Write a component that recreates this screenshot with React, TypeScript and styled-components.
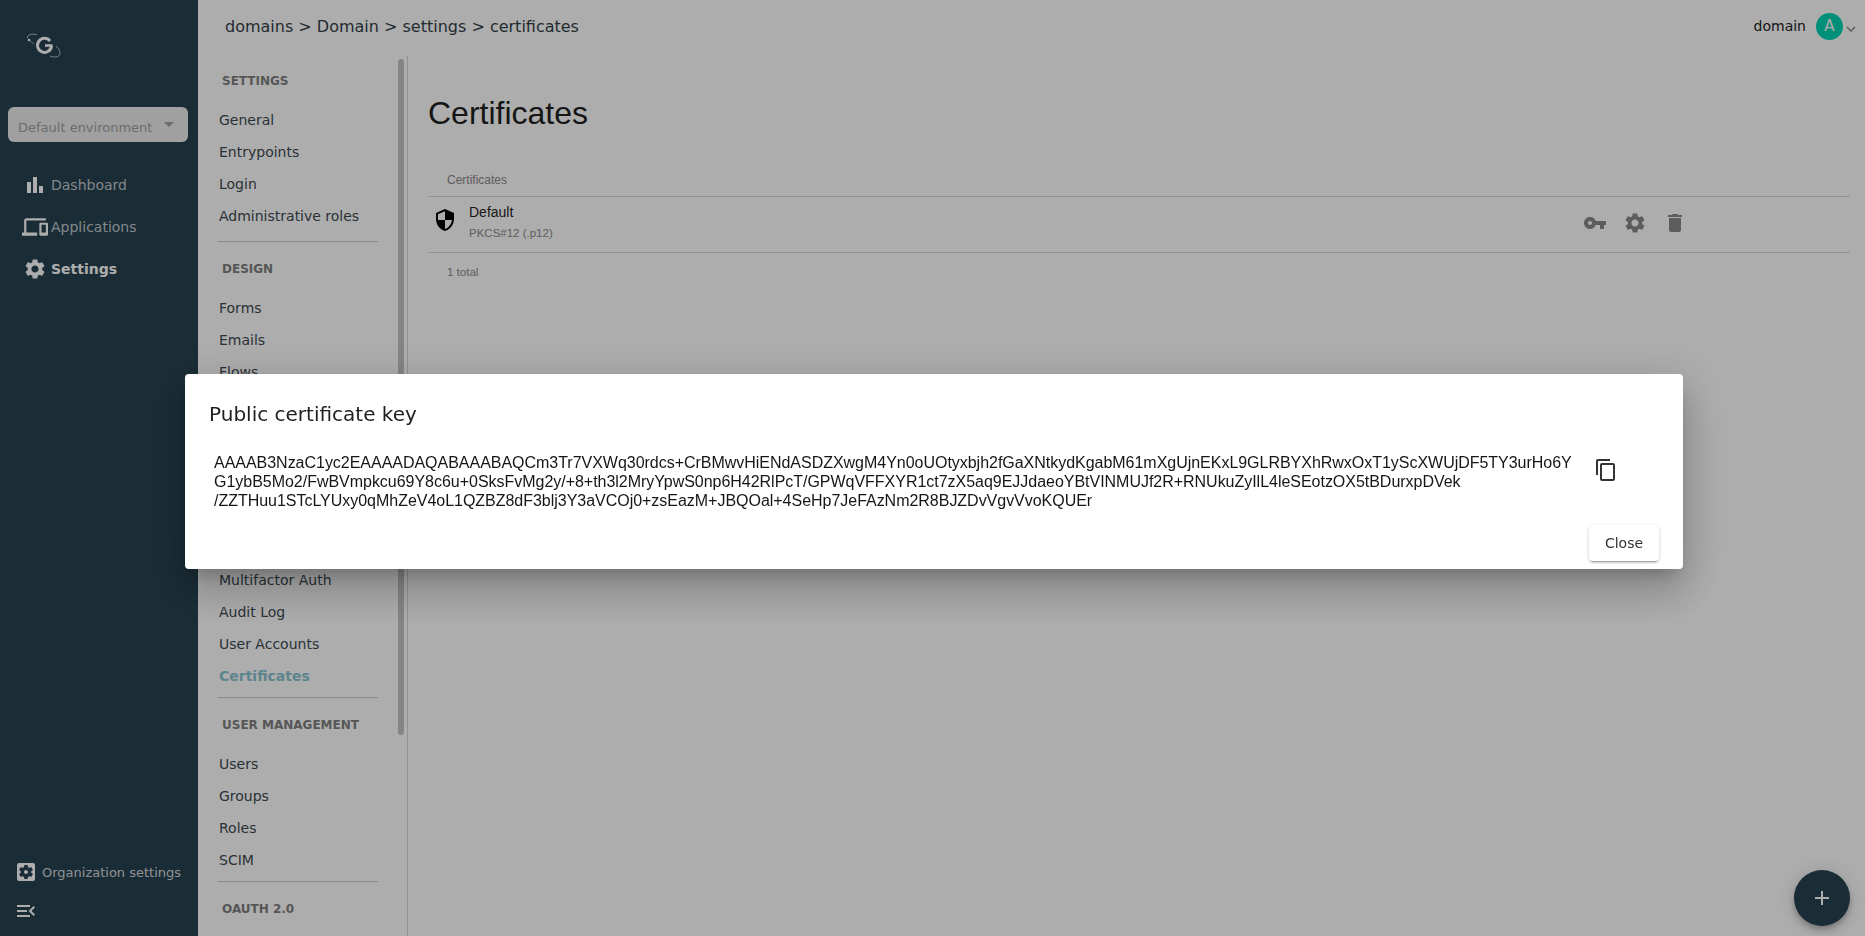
import styled, { createGlobalStyle } from 'styled-components';
import {
  MdAdd,
  MdBarChart,
  MdContentCopy,
  MdDelete,
  MdDevices,
  MdKeyboardArrowDown,
  MdMenuOpen,
  MdSecurity,
  MdSettings,
  MdSettingsApplications,
  MdVpnKey,
} from 'react-icons/md';

// the part of the menu behind the dialog is left out, MenuGap keeps its height
const menu = [
  {
    title: 'SETTINGS',
    items: ['General', 'Entrypoints', 'Login', 'Administrative roles'],
    divider: 9,
  },
  { title: 'DESIGN', items: ['Forms', 'Emails', 'Flows'], divider: 0 },
  {
    title: '',
    items: ['Multifactor Auth', 'Audit Log', 'User Accounts', 'Certificates'],
    divider: 5,
  },
  { title: 'USER MANAGEMENT', items: ['Users', 'Groups', 'Roles', 'SCIM'], divider: 5 },
  { title: 'OAUTH 2.0', items: [], divider: 0 },
];

const App = (): JSX.Element => {
  return (
    <>
      <GlobalStyle />
      <Page>
        <Sidebar>
          <LogoBox>
            <svg width="38" height="28" viewBox="0 0 38 28" fill="none">
              <path d="M1.5 7 C1 3.5 6 2 11 4" stroke="#ffffff" strokeOpacity="0.75" strokeWidth="0.9" />
              <circle cx="3" cy="9" r="1.3" fill="#ffffff" />
              <path d="M3 9 L8 13" stroke="#ffffff" strokeOpacity="0.7" strokeWidth="0.7" />
              <path d="M24 10 A7 7 0 1 0 25.5 15" stroke="#ffffff" strokeWidth="3" />
              <path d="M19 14.5 H26.5" stroke="#ffffff" strokeWidth="2.6" />
              <path d="M30 15 C35 19 36 26 29 26 C27 26 25 25.6 24 25" stroke="#ffffff" strokeOpacity="0.7" strokeWidth="0.9" />
            </svg>
          </LogoBox>
          <EnvSelect>
            <span>Default environment</span>
            <Caret />
          </EnvSelect>
          <NavList>
            <NavItem>
              <NavIcon><MdBarChart size={24} /></NavIcon>
              Dashboard
            </NavItem>
            <NavItem>
              <NavIcon><MdDevices size={26} /></NavIcon>
              Applications
            </NavItem>
            <NavItem $active>
              <NavIcon><MdSettings size={24} /></NavIcon>
              Settings
            </NavItem>
          </NavList>
          <SideFooter>
            <OrgLink>
              <MdSettingsApplications size={24} />
              Organization settings
            </OrgLink>
            <Collapse>
              <MdMenuOpen size={24} />
            </Collapse>
          </SideFooter>
        </Sidebar>

        <Content>
          <TopBar>
            <Breadcrumb>domains &gt; Domain &gt; settings &gt; certificates</Breadcrumb>
            <UserBox>
              <span>domain</span>
              <Avatar>A</Avatar>
              <MdKeyboardArrowDown size={18} color="#8a8a8a" />
            </UserBox>
          </TopBar>
          <Body>
            <SettingsMenu>
              <Scrollbar />
              {menu.map((section, i) => (
                <div key={section.items[0] || section.title}>
                  {section.title ? <SectionTitle $first={i === 0}>{section.title}</SectionTitle> : <MenuGap />}
                  {section.items.map((item) => (
                    <MenuItem key={item} $active={item === 'Certificates'}>
                      {item}
                    </MenuItem>
                  ))}
                  {section.divider > 0 && <MenuDivider $top={section.divider} />}
                </div>
              ))}
            </SettingsMenu>
            <Main>
              <Title>Certificates</Title>
              <TableHead>Certificates</TableHead>
              <Row>
                <RowName>
                  <ShieldIcon>
                    <MdSecurity size={24} color="#000" />
                  </ShieldIcon>
                  <div>
                    <Name>Default</Name>
                    <SubName>PKCS#12 (.p12)</SubName>
                  </div>
                </RowName>
                <Actions>
                  <MdVpnKey size={24} />
                  <MdSettings size={24} />
                  <MdDelete size={24} />
                </Actions>
              </Row>
              <TableFoot>1 total</TableFoot>
            </Main>
          </Body>
        </Content>
      </Page>

      <Fab>
        <MdAdd size={24} />
      </Fab>

      <Backdrop>
        <Dialog>
          <DialogTitle>Public certificate key</DialogTitle>
          <DialogBody>
            <KeyText>
              <div>AAAAB3NzaC1yc2EAAAADAQABAAABAQCm3Tr7VXWq30rdcs+CrBMwvHiENdASDZXwgM4Yn0oUOtyxbjh2fGaXNtkydKgabM61mXgUjnEKxL9GLRBYXhRwxOxT1yScXWUjDF5TY3urHo6Y</div>
              <div>G1ybB5Mo2/FwBVmpkcu69Y8c6u+0SksFvMg2y/+8+th3l2MryYpwS0np6H42RlPcT/GPWqVFFXYR1ct7zX5aq9EJJdaeoYBtVINMUJf2R+RNUkuZyIlL4leSEotzOX5tBDurxpDVek</div>
              <div>/ZZTHuu1STcLYUxy0qMhZeV4oL1QZBZ8dF3blj3Y3aVCOj0+zsEazM+JBQOal+4SeHp7JeFAzNm2R8BJZDvVgvVvoKQUEr</div>
            </KeyText>
            <CopyIcon>
              <MdContentCopy size={24} />
            </CopyIcon>
          </DialogBody>
          <DialogActions>
            <CloseBtn>Close</CloseBtn>
          </DialogActions>
        </Dialog>
      </Backdrop>
    </>
  );
};

export default App;

const GlobalStyle = createGlobalStyle`
  html, body {
    margin: 0;
    height: 100%;
    overflow: hidden;
    background: #fff;
  }
  * {
    box-sizing: border-box;
  }
`;

const Page = styled.div`
  display: flex;
  height: 936px;
  font-family: 'DejaVu Sans', sans-serif;
  color: #000;
`;

/* sidebar */
const Sidebar = styled.aside`
  width: 198px;
  flex-shrink: 0;
  background: #27424f;
  color: rgba(255, 255, 255, 0.8);
  display: flex;
  flex-direction: column;
`;
const LogoBox = styled.div`
  height: 107px;
  padding: 31px 0 0 26px;
`;
const EnvSelect = styled.div`
  width: 180px;
  height: 35px;
  margin-left: 8px;
  padding: 5px 10px 0;
  background: #ececec;
  border-radius: 6px;
  display: flex;
  align-items: center;
  justify-content: space-between;
  font-size: 13px;
  color: #a0a0a0;
`;
const Caret = styled.i`
  width: 0;
  height: 0;
  margin: -6px 4px 0 0;
  border-left: 5px solid transparent;
  border-right: 5px solid transparent;
  border-top: 5px solid #a0a0a0;
`;
const NavList = styled.nav`
  margin-top: 22px;
`;
const NavItem = styled.div<{ $active?: boolean }>`
  height: 42px;
  display: flex;
  align-items: center;
  gap: 3px;
  padding-left: 22px;
  font-size: 14px;
  font-weight: ${(p) => (p.$active ? 700 : 400)};
  color: ${(p) => (p.$active ? '#ffffff' : 'rgba(255, 255, 255, 0.72)')};
  svg {
    color: #fff;
  }
`;
const NavIcon = styled.span`
  width: 26px;
  display: flex;
  align-items: center;
  justify-content: center;
`;
const SideFooter = styled.div`
  margin-top: auto;
  padding: 0 0 13px 14px;
`;
const OrgLink = styled.div`
  display: flex;
  align-items: center;
  gap: 4px;
  height: 24px;
  font-size: 13px;
  color: rgba(255, 255, 255, 0.8);
  svg {
    color: #fff;
  }
`;
const Collapse = styled.div`
  margin-top: 15px;
  height: 24px;
  color: #fff;
`;

/* content */
const Content = styled.div`
  flex: 1;
  min-width: 0;
  display: flex;
  flex-direction: column;
`;
const TopBar = styled.header`
  height: 56px;
  flex-shrink: 0;
  padding: 0 5px 4px 27px;
  display: flex;
  align-items: center;
  justify-content: space-between;
`;
const Breadcrumb = styled.div`
  font-size: 16px;
  color: #333f48;
`;
const UserBox = styled.div`
  display: flex;
  align-items: center;
  gap: 10px;
  font-size: 14px;
  color: #222;
  svg {
    margin-left: -11px;
    margin-top: 6px;
  }
`;
const Avatar = styled.div`
  width: 27px;
  height: 27px;
  border-radius: 50%;
  background: #00d4b4;
  color: #fff;
  font-size: 15px;
  display: flex;
  align-items: center;
  justify-content: center;
`;
const Body = styled.div`
  flex: 1;
  min-height: 0;
  display: flex;
`;
const SettingsMenu = styled.div`
  position: relative;
  width: 210px;
  flex-shrink: 0;
  overflow: hidden;
  border-right: 1px solid #d9d9d9;
  padding-left: 21px;
`;
const Scrollbar = styled.div`
  position: absolute;
  top: 3px;
  left: 200px;
  width: 6px;
  height: 676px;
  background: #c4c4c4;
  border-radius: 3px;
`;
const SectionTitle = styled.div<{ $first?: boolean }>`
  height: 40px;
  margin: ${(p) => (p.$first ? '5px' : '7px')} 0 3px;
  padding-left: 3px;
  display: flex;
  align-items: center;
  font-size: 12px;
  font-weight: 700;
  color: #7f7f7f;
`;
const MenuGap = styled.div`
  height: 176px;
`;
const MenuItem = styled.div<{ $active?: boolean }>`
  height: 32px;
  display: flex;
  align-items: center;
  font-size: 14px;
  font-weight: ${(p) => (p.$active ? 700 : 400)};
  color: ${(p) => (p.$active ? '#8ac4d0' : '#3d4a52')};
`;
const MenuDivider = styled.div<{ $top: number }>`
  width: 160px;
  height: 1px;
  margin: ${(p) => p.$top}px 0 0 -1px;
  background: #cfcfcf;
`;
const Main = styled.main`
  flex: 1;
  min-width: 0;
  padding: 33px 15px 0 20px;
`;
const Title = styled.h1`
  margin: 0;
  height: 48px;
  font: 400 32px/48px 'Liberation Sans', Arial, sans-serif;
  color: #1f1f1f;
`;
const TableHead = styled.div`
  height: 60px;
  padding: 34px 0 0 19px;
  font: 12px/18px 'Liberation Sans', Arial, sans-serif;
  color: #8a8a8a;
  border-bottom: 1px solid #d9d9d9;
`;
const Row = styled.div`
  height: 56px;
  display: flex;
  align-items: center;
  border-bottom: 1px solid #d9d9d9;
`;
const RowName = styled.div`
  flex: 1;
  display: flex;
  align-items: center;
  gap: 12px;
  padding-left: 5px;
  margin-top: -5px;
`;
const ShieldIcon = styled.span`
  display: flex;
  margin-top: -5px;
`;
const Name = styled.div`
  font: 14px/20px 'Liberation Sans', Arial, sans-serif;
  color: #1f1f1f;
`;
const SubName = styled.div`
  margin-top: 2px;
  font: 11.5px/18px 'Liberation Sans', Arial, sans-serif;
  color: #8a8a8a;
`;
const Actions = styled.div`
  width: 267px;
  display: flex;
  gap: 16px;
  color: #8a8a8a;
  margin-top: -3px;
`;
const TableFoot = styled.div`
  padding: 10px 0 0 19px;
  font: 11.5px/18px 'Liberation Sans', Arial, sans-serif;
  color: #8a8a8a;
`;

/* things over the page */
const Fab = styled.button`
  position: fixed;
  right: 15px;
  bottom: 10px;
  z-index: 1;
  width: 56px;
  height: 56px;
  padding: 0;
  border: none;
  border-radius: 50%;
  background: #27424f;
  color: #fff;
  display: flex;
  align-items: center;
  justify-content: center;
  box-shadow: 0 3px 5px -1px rgba(0, 0, 0, 0.2), 0 6px 10px 0 rgba(0, 0, 0, 0.14), 0 1px 18px 0 rgba(0, 0, 0, 0.12);
`;
const Backdrop = styled.div`
  position: fixed;
  inset: 0;
  z-index: 2;
  background: rgba(0, 0, 0, 0.32);
  display: flex;
  justify-content: center;
  padding: 374px 0 0 3px;
`;
const Dialog = styled.div`
  width: 1498px;
  height: 195px;
  padding: 24px;
  background: #fff;
  border-radius: 4px;
  box-shadow: 0 11px 15px -7px rgba(0, 0, 0, 0.2), 0 24px 38px 3px rgba(0, 0, 0, 0.14), 0 9px 46px 8px rgba(0, 0, 0, 0.12);
`;
const DialogTitle = styled.h2`
  margin: 0;
  height: 32px;
  font: 400 20px/32px 'DejaVu Sans', sans-serif;
  color: #1f1f1f;
`;
const DialogBody = styled.div`
  display: flex;
  align-items: flex-start;
  margin-top: 23px;
  padding-left: 5px;
`;
const KeyText = styled.div`
  width: 1380px;
  font: 16px/19px 'Liberation Sans', Arial, sans-serif;
  letter-spacing: -0.025px;
  white-space: nowrap;
  color: #161616;
`;
const CopyIcon = styled.span`
  margin-top: 5px;
  color: #333;
`;
const DialogActions = styled.div`
  display: flex;
  justify-content: flex-end;
  margin-top: 15px;
`;
const CloseBtn = styled.button`
  width: 70px;
  height: 36px;
  border: none;
  border-radius: 4px;
  background: #fff;
  font: 500 14px 'DejaVu Sans', sans-serif;
  color: #333;
  box-shadow: 0 3px 1px -2px rgba(0, 0, 0, 0.2), 0 2px 2px 0 rgba(0, 0, 0, 0.14), 0 1px 5px 0 rgba(0, 0, 0, 0.12);
`;
